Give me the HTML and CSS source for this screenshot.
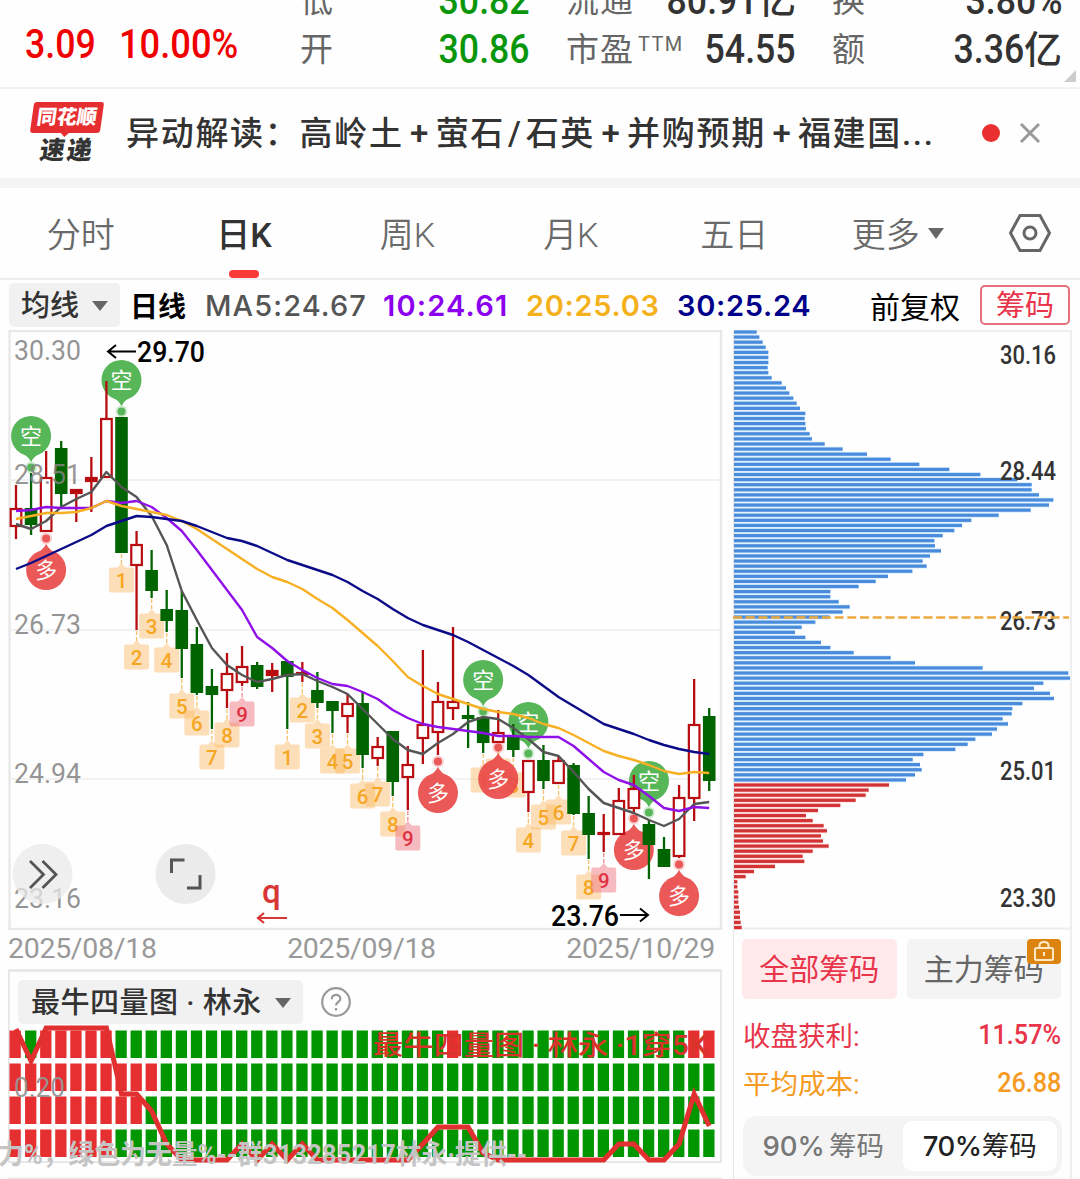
FILE: index.html
```
<!DOCTYPE html>
<html lang="zh-CN">
<head>
    <meta charset="UTF-8">
    <meta name="viewport" content="width=device-width, initial-scale=1.0">
    <title>日K</title>
    <link rel="stylesheet" href="styles.css">
</head>
<body>
    <div class="quote">
        <div class="quote-row">
            <span class="change"></span>
            <span class="label">低</span>
            <span class="value green"><b class="num">30.82</b></span>
            <span class="label pe">流通</span>
            <span class="value cap"><b class="num">80.91</b>亿</span>
            <span class="label turn">换</span>
            <span class="value last"><b class="num">3.80%</b></span>
        </div>
        <div class="quote-row">
            <span class="change up"><b class="num">3.09</b><b class="num pct">10.00%</b></span>
            <span class="label">开</span>
            <span class="value green"><b class="num">30.86</b></span>
            <span class="label pe">市盈<sup>TTM</sup></span>
            <span class="value cap"><b class="num">54.55</b></span>
            <span class="label turn">额</span>
            <span class="value last"><b class="num">3.36</b>亿</span>
        </div>
        <i class="corner"></i>
    </div>

    <div class="news">
        <div class="news-logo">
            <div class="logo-top"><span>同花顺</span></div>
            <div class="logo-bottom">速递</div>
        </div>
        <div class="news-title">异动解读：高岭土<em class="plus">+</em>萤石<em>/</em>石英<em class="plus">+</em>并购预期<em class="plus">+</em>福建国...</div>
        <i class="dot"></i>
        <svg class="close" width="22" height="22" viewBox="0 0 22 22"><path d="M2 2L20 20M20 2L2 20"/></svg>
    </div>

    <div class="tabs">
        <a class="tab">分时</a>
        <a class="tab active">日K</a>
        <a class="tab">周K</a>
        <a class="tab">月K</a>
        <a class="tab">五日</a>
        <a class="tab more">更多<i class="arrow"></i></a>
        <svg class="setting" width="44" height="40" viewBox="0 0 44 40"><path d="M12 2.5H32L41.5 20L32 37.5H12L2.5 20Z"/><circle cx="22" cy="20" r="6"/></svg>
    </div>

    <div class="ma-bar">
        <div class="select">均线<i class="arrow"></i></div>
        <b class="period">日线</b>
        <span class="ma ma5">MA5:24.67</span>
        <span class="ma ma10">10:24.61</span>
        <span class="ma ma20">20:25.03</span>
        <span class="ma ma30">30:25.24</span>
        <span class="adjust">前复权</span>
        <span class="chip-btn">筹码</span>
    </div>

    <div class="main">
        <div class="left">
            <svg id="kline" width="733" height="600" viewBox="0 330 733 600"></svg>
            <div class="dates"><span>2025/08/18</span><span>2025/09/18</span><span>2025/10/29</span></div>
            <div class="sub">
                <div class="sub-head">
                    <div class="select">最牛四量图 · 林永<i class="arrow"></i></div>
                    <svg class="help" width="32" height="32" viewBox="0 0 32 32"><circle cx="16" cy="16" r="13.8"/><path d="M11.8 13.2C11.8 7.4 20.4 7.6 20.4 12.6C20.4 16 16 15.8 16 19.6M16 22V24.4"/></svg>
                </div>
            </div>
            <svg id="volume" width="733" height="156" viewBox="0 1024 733 156"></svg>
        </div>
        <div class="right">
            <svg id="chips" width="338" height="600" viewBox="733 330 338 600"></svg>
            <div class="chip-tabs">
                <div class="chip-tab on">全部筹码</div>
                <div class="chip-tab">主力筹码
                    <span class="lock"><svg width="22" height="22" viewBox="0 0 22 22"><rect x="2" y="8" width="18" height="12" rx="1.5"/><path d="M6.5 8V5.5Q6.5 2 11 2T15.5 5.5V8M11 12V16"/></svg></span>
                </div>
            </div>
            <div class="stat red"><span>收盘获利:</span><b class="num">11.57%</b></div>
            <div class="stat orange"><span>平均成本:</span><b class="num">26.88</b></div>
            <div class="segment">
                <span><i>90%</i>筹码</span>
                <span class="on"><i>70%</i>筹码</span>
            </div>
        </div>
    </div>

    <script src="chart.js"></script>
</body>
</html>
```
FILE: styles.css
```
body {
    margin: 0;
    width: 1080px;
    height: 1179px;
    overflow: hidden;
    background: #fefefe;
    color: #333;
    font-family: Roboto, "Noto Sans CJK SC", sans-serif;
}
.num {
    display: inline-block;
    font-family: Roboto, sans-serif;
    font-weight: 500;
    font-size: 41px;
    transform: scaleX(0.87);
    transform-origin: right center;
}

/* quote header */
.quote {
    height: 89px;
    box-sizing: border-box;
    border-bottom: 2px solid #f2f2f2;
    overflow: hidden;
    position: relative;
}
.quote-row {
    display: flex;
    align-items: center;
    height: 49px;
    font-size: 33px;
    line-height: 49px;
    white-space: nowrap;
}
.quote-row:first-child {
    margin-top: -24px;
}
.change {
    width: 300px;
    box-sizing: border-box;
    padding-left: 25px;
    position: relative;
    top: -4px;
}
.change .num {
    transform-origin: left center;
}
.change.up {
    color: #f00000;
}
.change .pct {
    margin-left: 13px;
    transform: scaleX(0.885);
}
.label {
    width: 100px;
    color: #666;
}
.label.pe {
    width: 120px;
    letter-spacing: 1px;
}
.label.turn {
    width: 70px;
}
.label sup {
    font-size: 20px;
    line-height: 0;
    margin-left: 4px;
    letter-spacing: 1.4px;
    vertical-align: 10px;
}
.value {
    width: 130px;
    margin-right: 36px;
    text-align: right;
    color: #333;
    font-size: 38px;
    font-weight: 500;
}
.value.green {
    color: #0a960a;
}
.value.cap {
    width: 110px;
    display: flex;
    justify-content: flex-end;
}
.value.last {
    width: 160px;
    margin-right: 18px;
}
.corner {
    position: absolute;
    right: 4px;
    bottom: 5px;
    border-left: 12px solid transparent;
    border-bottom: 12px solid #ccc;
}

/* news line */
.news {
    display: flex;
    align-items: center;
    height: 89px;
    padding-left: 30px;
    border-bottom: 10px solid #f4f4f4;
}
.news-logo {
    width: 74px;
    height: 63px;
    margin-right: 22px;
    font-weight: 900;
    text-align: center;
    white-space: nowrap;
}
.logo-top {
    width: 70px;
    height: 31px;
    margin-left: 2px;
    background: #e62e31;
    color: #fff;
    font-size: 20px;
    line-height: 31px;
    border-radius: 3px;
    transform: skewX(-8deg);
    position: relative;
}
.logo-top:after {
    content: "";
    position: absolute;
    left: 30px;
    top: 30px;
    border: 5px solid transparent;
    border-top-color: #e62e31;
}
.logo-bottom {
    font-size: 25px;
    line-height: 35px;
    letter-spacing: 2px;
    transform: skewX(-8deg);
}
.news-title {
    width: 830px;
    font-size: 33px;
    font-weight: 500;
    letter-spacing: 1.7px;
    line-height: 44px;
    padding-top: 1px;
    white-space: nowrap;
}
.news-title em {
    font-style: normal;
    margin: 0 3px;
}
.news-title .plus {
    margin: 0 5.5px 0 6.5px;
}
.dot {
    width: 18px;
    height: 18px;
    margin: 0 0 2px 26px;
    border-radius: 50%;
    background: #e92f2f;
}
.close {
    margin: 0 0 2px 19px;
    fill: none;
    stroke: #999;
    stroke-width: 3;
}

/* period tabs */
.tabs {
    display: flex;
    height: 90px;
    border-bottom: 2px solid #eee;
    position: relative;
}
.tab {
    width: 163.4px;
    color: #6a6a6a;
    font-size: 34px;
    font-weight: 350;
    line-height: 94px;
    text-align: center;
    position: relative;
    left: -1px;
}
.tab.active {
    color: #333;
    font-weight: 500;
}
.tab.active:after {
    content: "";
    position: absolute;
    left: 67px;
    bottom: 0;
    width: 30px;
    height: 8px;
    border-radius: 4px;
    background: #fa3a38;
}
.arrow {
    display: inline-block;
    border: 8px solid transparent;
    border-top: 11px solid #666;
    border-bottom: 0;
    vertical-align: 5px;
}
.more .arrow {
    margin-left: 8px;
    vertical-align: 8px;
}
.setting {
    margin: 25px 0 0 28px;
    fill: none;
    stroke: #666;
    stroke-width: 3;
}

/* moving average values */
.ma-bar {
    display: flex;
    align-items: center;
    height: 50px;
    padding-left: 9px;
    font-size: 29px;
    white-space: nowrap;
}
.select {
    background: #f1f1f1;
    border-radius: 5px;
    height: 44px;
    line-height: 46px;
    font-size: 29px;
    font-weight: 500;
    padding: 0 12px;
}
.select .arrow {
    margin-left: 13px;
    border-top-width: 10px;
}
.period {
    width: 56px;
    margin: 0 19px 0 10px;
    font-size: 28px;
    color: #000;
}
.ma {
    width: 161px;
    margin-right: 17px;
    font-family: Inter, sans-serif;
    font-size: 29px;
    font-weight: 600;
    letter-spacing: 0.7px;
}
.ma5 { color: #555; font-weight: 500; letter-spacing: 1.1px; }
.ma10 { color: #8c00f0; width: 126px; letter-spacing: 1.2px; }
.ma20 { color: #f5b11c; width: 134px; }
.ma30 { color: #00008b; width: 134px; }
.adjust {
    margin-left: 42px;
    width: 90px;
    color: #000;
    font-size: 30px;
}
.chip-btn {
    width: 86px;
    height: 36px;
    margin-left: 20px;
    border: 2px solid #e4717b;
    border-radius: 5px;
    color: #e8354a;
    line-height: 38px;
    text-align: center;
}

/* charts */
.main {
    display: flex;
}
.main svg {
    display: block;
}
.left {
    width: 733px;
}
.right {
    width: 336px;
    height: 850px;
    border-left: 1px solid #e5e5e5;
    border-right: 2px solid #eee;
}
#chips {
    margin-left: -1px;
}
svg text {
    font-family: Roboto, "Noto Sans CJK SC", sans-serif;
}
.dates {
    display: flex;
    justify-content: space-between;
    height: 38px;
    padding: 0 18px 0 8px;
    color: #999;
    font-size: 28.5px;
    line-height: 38px;
    letter-spacing: -0.3px;
}
.sub {
    height: 56px;
    margin: 1px 11px 0 8px;
    box-sizing: border-box;
    border: 2px solid #e8e8e8;
    border-top-width: 3px;
    border-bottom: 0;
}
.sub-head {
    display: flex;
    align-items: center;
    padding: 8px 0 0 8px;
}
.sub-head .select {
    letter-spacing: 0.5px;
    padding-left: 13px;
    line-height: 47px;
}
.help {
    margin-left: 17px;
    fill: none;
    stroke: #999;
    stroke-width: 2.2;
}
#volume {
    overflow: visible;
}

/* chip panel */
.chip-tabs {
    display: flex;
    gap: 10px;
    padding: 9px 9px 0 8px;
}
.chip-tab {
    flex: 1;
    height: 60px;
    border-radius: 5px;
    background: #f4f4f4;
    color: #666;
    font-size: 30px;
    line-height: 62px;
    text-align: center;
    position: relative;
}
.chip-tab.on {
    background: #ffe9eb;
    color: #e8354a;
}
.lock {
    position: absolute;
    right: 0;
    top: 0;
    width: 34px;
    height: 25px;
    border-radius: 4px;
    background: #dc8412;
}
.lock svg {
    margin: 1px 0 0 6px;
    fill: none;
    stroke: #ffe9c4;
    stroke-width: 2;
}
.stat {
    display: flex;
    justify-content: space-between;
    align-items: center;
    height: 48px;
    padding: 0 9px 0 9px;
    font-size: 27.5px;
}
.chip-tabs + .stat {
    margin-top: 11px;
}
.stat .num {
    font-size: 28px;
    transform: scaleX(0.9);
}
.red { color: #e8354a; }
.orange { color: #f59b23; }
.segment {
    display: flex;
    box-sizing: border-box;
    height: 60px;
    margin: 10px 8px 0 9px;
    padding: 5px;
    border-radius: 14px;
    background: #f4f4f4;
    color: #777;
    font-size: 27.5px;
    line-height: 50px;
    text-align: center;
}
.segment span {
    flex: 1;
    position: relative;
    left: -2px;
}
.segment i {
    font-style: normal;
    font-family: Inter, "Noto Sans CJK SC", sans-serif;
    font-weight: 500;
    margin-right: 4px;
}
.segment .on {
    left: 0;
    border-radius: 9px;
    background: #fff;
    color: #222;
}
.segment .on i {
    margin-right: 0;
    letter-spacing: -0.5px;
}
```
FILE: chart.js
```
const NS = 'http://www.w3.org/2000/svg';

function add(svg, name, attrs, text) {
    const el = document.createElementNS(NS, name);
    for (const k in attrs) el.setAttribute(k, attrs[k]);
    if (text !== undefined) el.textContent = text;
    svg.appendChild(el);
    return el;
}

function label(svg, x, y, w, size, color, text, weight) {
    add(svg, 'text', {
        x: x, y: y, fill: color, 'font-size': size, 'font-weight': weight || 400,
        textLength: w, lengthAdjust: 'spacingAndGlyphs'
    }, text);
}

const xAt = i => 16 + i * 15.07;

// [up, high, bodyTop, bodyBottom, low]
const candles = [
    [1,485,508,527,539],[0,473,508,525,535],[1,451,477,532,532],[0,441,448,494,506],[1,489,489,494,522],
    [1,457,477,482,512],[1,381,418,478,478],[0,417,417,553,553],[1,531,544,566,630],[0,550,570,591,598],
    [0,590,609,621,632],[0,591,610,649,678],[0,627,644,693,695],[0,669,686,695,729],[1,653,673,691,708],
    [1,646,666,683,686],[0,662,665,687,689],[1,663,670,676,692],[0,661,661,677,729],[1,662,672,674,682],
    [0,672,690,703,708],[0,701,701,711,733],[1,694,703,717,733],[0,692,703,755,768],[1,737,746,759,766],
    [0,731,731,782,796],[1,746,764,778,810],[1,650,724,739,764],[1,682,701,733,755],[1,627,701,709,720],
    [0,702,715,719,748],[0,717,717,743,753],[1,710,732,743,743],[0,724,737,750,757],[1,760,760,793,812],
    [0,745,760,781,789],[1,757,760,784,784],[0,763,765,814,815],[0,796,813,835,859],[1,814,832,835,852],
    [1,788,800,835,835],[1,775,788,809,813],[0,820,824,845,879],[0,837,849,867,867],[1,785,797,857,858],
    [1,679,724,799,821],[0,708,716,781,791]
];

const ma = {
    '#555555': [524,529,521,507,499,492,472,487,497,516,545,591,620,648,665,675,682,679,675,674,681,687,694,709,724,739,750,754,743,734,722,717,719,728,739,752,756,772,789,803,808,813,820,826,819,804,802],
    '#9010e8': [511,510,507,508,508,508,501,503,501,507,518,531,550,570,590,610,637,648,661,670,678,684,686,692,699,710,718,724,727,729,731,733,736,736,737,737,737,746,759,772,780,785,796,808,811,807,808],
    '#f7b023': [519,516,513,513,512,508,501,506,509,512,515,521,529,539,549,559,569,577,582,589,599,608,620,633,646,661,677,686,694,699,704,709,712,714,718,724,728,735,743,751,756,760,765,771,774,772,773],
    '#0b0b88': [569,563,556,549,542,535,526,521,516,517,519,521,526,532,538,541,546,553,560,565,570,575,582,591,599,609,618,625,630,635,642,650,658,666,675,686,697,706,715,724,729,734,740,745,749,752,754]
};

// [candle index, number, centre y]
const counts = [
    [7,1,580],[8,2,657],[9,3,626],[10,4,660],[11,5,706],[12,6,723],[13,7,757],[14,8,735],[15,9,714],
    [18,1,757],[19,2,710],[20,3,736],[21,4,761],[22,5,761],[23,6,796],[24,7,794],[25,8,824],[26,9,838],
    [31,1,780],[32,2,771],[33,3,785],[34,4,840],[35,5,817],[36,6,812],[37,7,843],[38,8,887],[39,9,880]
];

// [candle index, pin centre y]
const shorts = [[1,436],[7,380],[31,680],[34,722],[42,781]];
const longs = [[2,570],[28,793],[32,779],[41,850],[44,896]];

function pin(svg, i, y, up) {
    const x = xAt(i), d = up ? -1 : 1;
    const color = up ? '#ea4a4a' : '#48b04b';
    const g = add(svg, 'g', { opacity: 0.92 });
    const dotY = y + d * 31.5;
    add(g, 'circle', { cx: x, cy: dotY, r: 6, fill: color, opacity: 0.25 });
    add(g, 'circle', { cx: x, cy: dotY, r: 4, fill: color });
    add(g, 'circle', { cx: x, cy: y, r: 20, fill: color });
    add(g, 'path', { d: `M${x - 11} ${y + d * 16}Q${x - 3} ${y + d * 20} ${x} ${y + d * 26}Q${x + 3} ${y + d * 20} ${x + 11} ${y + d * 16}Z`, fill: color });
    add(g, 'text', { x: x, y: y + 8, fill: '#fff', 'font-size': 22, 'text-anchor': 'middle' }, up ? '多' : '空');
}

function drawKline() {
    const svg = document.getElementById('kline');
    add(svg, 'rect', { x: 9.5, y: 331, width: 711.5, height: 598, fill: 'none', stroke: '#e8e8e8', 'stroke-width': 2.4 });
    [480, 630, 779].forEach(y => add(svg, 'path', { d: `M10 ${y}H720`, stroke: '#eee', 'stroke-width': 1.5 }));

    counts.forEach(([i, n, y]) => {
        const x = xAt(i), hot = n === 9;
        const low = candles[i][4];
        // the 2 of the third run lies fully under a pin
        const covered = i === 32;
        add(svg, 'path', { d: `M${x} ${low + 1}V${y - 16}`, stroke: hot ? '#e88' : '#f5c26b', 'stroke-width': 1.3, 'stroke-dasharray': '4 2' });
        add(svg, 'path', { d: `M${x - 10.5} ${y - 12.5}H${x - 4}L${x} ${y - 17}L${x + 4} ${y - 12.5}H${x + 10.5}Q${x + 12.5} ${y - 12.5} ${x + 12.5} ${y - 10.5}V${y + 10.5}Q${x + 12.5} ${y + 12.5} ${x + 10.5} ${y + 12.5}H${x - 10.5}Q${x - 12.5} ${y + 12.5} ${x - 12.5} ${y + 10.5}V${y - 10.5}Q${x - 12.5} ${y - 12.5} ${x - 10.5} ${y - 12.5}Z`, fill: hot ? '#ee6a78' : '#fbb250', opacity: hot ? 0.45 : 0.4 });
        if (!covered) {
            add(svg, 'text', { x: x, y: y + 7.5, fill: hot ? '#e03040' : '#f5a623', 'font-size': 20.5, 'font-weight': 500, 'text-anchor': 'middle' }, n);
        }
    });

    shorts.forEach(([i, y]) => pin(svg, i, y, false));
    longs.forEach(([i, y]) => pin(svg, i, y, true));

    candles.forEach(([up, high, top, bottom, low], i) => {
        const x = xAt(i);
        if (up) {
            const h = Math.max(bottom - top - 2, 1);
            add(svg, 'path', { d: `M${x} ${high}V${top}M${x} ${bottom}V${low}`, stroke: '#b80c10', 'stroke-width': 2.3 });
            add(svg, 'rect', { x: x - 5.3, y: top + 1, width: 10.6, height: h, fill: bottom - top < 7 ? '#b80c10' : '#fff', stroke: '#b80c10', 'stroke-width': 2.2 });
        } else {
            add(svg, 'path', { d: `M${x} ${high}V${low}`, stroke: '#006400', 'stroke-width': 2.3 });
            add(svg, 'rect', { x: x - 6.3, y: top, width: 12.6, height: bottom - top, fill: '#006400' });
        }
    });

    for (const color in ma) {
        const points = ma[color].map((y, i) => xAt(i) + ',' + y).join(' ');
        add(svg, 'polyline', { points: points, fill: 'none', stroke: color, 'stroke-width': 2.4, 'stroke-linejoin': 'round' });
    }

    [['30.30', 360], ['28.51', 484], ['26.73', 634], ['24.94', 783], ['23.16', 908]].forEach(([t, y]) =>
        label(svg, 14, y, 67, 28.5, 'rgba(130,130,130,.85)', t));
    label(svg, 137, 362, 68, 29, '#000', '29.70', 500);
    add(svg, 'path', { d: 'M136 351.500H109M116 345L108 351.500L116 358', fill: 'none', stroke: '#000', 'stroke-width': 2 });
    label(svg, 551, 926, 68, 29, '#000', '23.76', 500);
    add(svg, 'path', { d: 'M620 915H647M640 908.500L648 915L640 921.500', fill: 'none', stroke: '#000', 'stroke-width': 2 });

    // floating buttons
    add(svg, 'circle', { cx: 42.5, cy: 874, r: 30, fill: '#e9e9e9', opacity: 0.75 });
    add(svg, 'path', { d: 'M30 861L43.500 874.500L30 888M42.500 861L56 874.500L42.500 888', fill: 'none', stroke: '#555', 'stroke-width': 2.8 });
    add(svg, 'circle', { cx: 185.5, cy: 874, r: 30, fill: '#ebebeb' });
    add(svg, 'path', { d: 'M184.500 860H171.500V873M187 888H200V875', fill: 'none', stroke: '#555', 'stroke-width': 3 });
    add(svg, 'text', { x: 262, y: 903, fill: '#d93636', 'font-size': 33, 'font-weight': 500 }, 'q');
    add(svg, 'path', { d: 'M287 918H259M264 913L258 918L264 923', fill: 'none', stroke: '#d93636', 'stroke-width': 2.2 });
}

function drawVolume() {
    const svg = document.getElementById('volume');
    add(svg, 'path', { d: 'M9 1024V1161H721V1024', fill: 'none', stroke: '#e8e8e8', 'stroke-width': 2 });
    add(svg, 'path', { d: 'M8 1178H722', stroke: '#e8e8e8', 'stroke-width': 3 });
    const rows = [
        [1029.5, i => i === 0 || (i > 1 && i < 7) || i === 29 || i > 44],
        [1062.5, i => i < 10],
        [1095.5, i => i < 9],
        [1128.5, i => i < 7]
    ];
    rows.forEach(([y, isRed]) => {
        for (let i = 0; i < 47; i++) {
            add(svg, 'rect', { x: xAt(i) - (i ? 6 : 6.5), y: y, width: 11.3, height: 27.5, fill: isRed(i) ? '#e62f30' : '#009600' });
        }
    });
    const line = [[0,1028],[1,1060],[2,1027],[6,1027],[7,1093],[8,1093],[9,1110],[10,1143],[11,1159],[14,1159],[15,1143],[16,1159],[17,1143],[18,1159],[19,1143],[20,1159],[26,1159],[27,1143],[28,1126],[30,1126],[31,1152],[32,1159],[39,1159],[40,1143],[41,1143],[42,1159],[43,1159],[44,1143],[45,1093],[46,1125]];
    add(svg, 'polyline', { points: line.map(([i, y]) => xAt(i) + ',' + y).join(' '), fill: 'none', stroke: '#e0302f', 'stroke-width': 5 });
    label(svg, 14, 1096, 51, 28, 'rgba(150,150,150,.95)', '0.20');
    label(svg, 373, 1054, 335, 27.5, '#d9342b', '最牛四量图 · 林永 ·1穿5K', 500);
    label(svg, -2, 1163, 529, 27, '#c4c4c4', '力%，绿色为无量%--群313285217林永·提供--', 700);
}

// bar ends of the cost distribution, in thirds of a pixel
const chips = [80,88,98,107,115,115,115,113,115,125,155,168,178,190,200,210,226,224,226,228,239,246,284,338,411,482,568,658,751,862,905,905,927,970,957,902,806,724,696,673,638,613,615,633,600,578,590,547,474,437,386,301,301,326,359,338,298,256,215,195,226,273,301,371,482,555,758,1015,1020,940,912,960,972,877,847,845,818,834,801,786,736,713,676,580,548,570,575,555,528,477,416,407,377,331,264,228,248,281,291,273,279,296,248,218,223,135,72,47,22,22,25,25,25,27,30,30,32,35];

function drawChips() {
    const svg = document.getElementById('chips');
    add(svg, 'path', { d: 'M733 331H1071M733 928.500H1071', stroke: '#eee', 'stroke-width': 2 });
    chips.forEach((w, i) => {
        const red = i > 88;
        const y = 332 + i * 5.09;
        add(svg, 'rect', { x: 734, y: y - 2.4, width: (w - 12) / 3, height: 4.8, fill: red ? '#fbdada' : '#d3ecff' });
        add(svg, 'rect', { x: 734, y: y - 1.6, width: (w - 12) / 3, height: 3.2, fill: red ? '#d23436' : '#4a8bdb' });
    });
    [['30.16', 364], ['28.44', 480], ['26.73', 630], ['25.01', 780], ['23.30', 907]].forEach(([t, y]) =>
        label(svg, 1000, y, 56, 25, '#333', t, 500));
    add(svg, 'path', { d: 'M733 617.500H1069', stroke: '#eda93e', 'stroke-width': 2.4, 'stroke-dasharray': '9 3.700' });
}

drawKline();
drawVolume();
drawChips();
```
